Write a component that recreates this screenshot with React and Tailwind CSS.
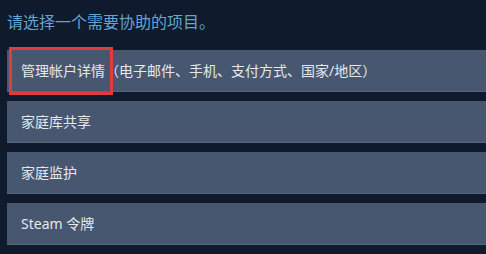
import React from "react";

const rows = [
  "管理帐户详情（电子邮件、手机、支付方式、国家/地区）",
  "家庭库共享",
  "家庭监护",
  "Steam 令牌",
];

export default function App() {
  return (
    <div
      className="w-[486px] h-[254px] overflow-hidden bg-[#0f1b2d] relative"
      style={{ fontFamily: '"Noto Sans", "Noto Sans CJK SC", sans-serif' }}
    >
      <div className="pl-[7px] pt-[9px] h-[50px] text-[16px] leading-[26px] text-[#63a4d4]">
        请选择一个需要协助的项目。
      </div>
      <div className="flex flex-col gap-[9px] pl-[7px]">
        {rows.map((r, i) => (
          <div
            key={i}
            className="h-[42px] w-[490px] bg-[#475770] border-b border-[#56667d] flex items-center pl-[14px] text-[14px] text-[#e4e8ec] whitespace-nowrap"
          >
            {r}
          </div>
        ))}
      </div>
      <div className="absolute left-[9px] top-[47px] w-[104px] h-[48px] border-[3px] border-[#e23b3b]" />
    </div>
  );
}
